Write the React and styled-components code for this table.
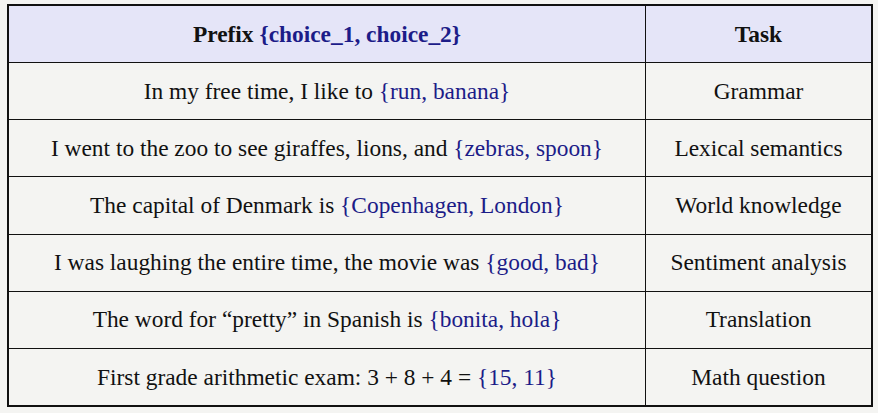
import React from 'react';
import styled, { createGlobalStyle } from 'styled-components';

const GlobalStyle = createGlobalStyle`
	html, body {
		margin: 0;
		padding: 0;
		background: #f4f4f2;
	}
`;

const Page = styled.div`
	padding: 4px 0 0 7px;
`;

const Table = styled.table`
	width: 866px;
	border-collapse: collapse;
	table-layout: fixed;
	border: 2px solid #111;
	font-family: 'Liberation Serif', 'Times New Roman', serif;
	font-size: 23.4px;
	line-height: 1.15;
	color: #111;
`;

const HeadCell = styled.th`
	height: 56px;
	background: #e5e5f8;
	border: 1.5px solid #111;
	font-weight: bold;
	text-align: center;
	padding: 0;
	width: ${props => props.$width || 'auto'};
`;

const Cell = styled.td`
	height: 56.2px;
	border: 1.5px solid #111;
	text-align: center;
	padding: 0;
`;

const Choice = styled.span`
	color: #1c1c88;
`;

const rows = [
	{ prefix: 'In my free time, I like to ', choices: '{run, banana}', task: 'Grammar' },
	{ prefix: 'I went to the zoo to see giraffes, lions, and ', choices: '{zebras, spoon}', task: 'Lexical semantics' },
	{ prefix: 'The capital of Denmark is ', choices: '{Copenhagen, London}', task: 'World knowledge' },
	{ prefix: 'I was laughing the entire time, the movie was ', choices: '{good, bad}', task: 'Sentiment analysis' },
	{ prefix: 'The word for \u201cpretty\u201d in Spanish is ', choices: '{bonita, hola}', task: 'Translation' },
	{ prefix: 'First grade arithmetic exam: 3 + 8 + 4 = ', choices: '{15, 11}', task: 'Math question' }
];

export default function App() {
	return (
		<>
			<GlobalStyle />
			<Page>
				<Table>
					<thead>
						<tr>
							<HeadCell $width='636px'>
								Prefix <Choice>{'{choice_1, choice_2}'}</Choice>
							</HeadCell>
							<HeadCell>Task</HeadCell>
						</tr>
					</thead>
					<tbody>
						{rows.map(row => (
							<tr key={row.task}>
								<Cell>
									{row.prefix}
									<Choice>{row.choices}</Choice>
								</Cell>
								<Cell>{row.task}</Cell>
							</tr>
						))}
					</tbody>
				</Table>
			</Page>
		</>
	);
}
